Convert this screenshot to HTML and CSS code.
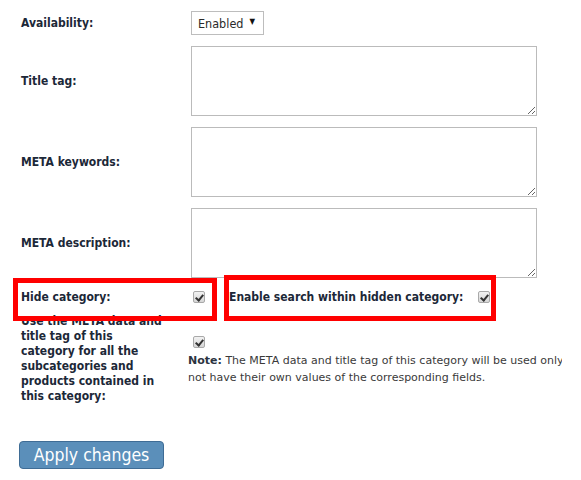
FILE: index.html
```html
<!DOCTYPE html>
<html>
<head>
<meta charset="utf-8">
<title>Category</title>
<link rel="stylesheet" href="styles.css">
</head>
<body>
<div class="page">
  <div class="form">
    <div class="label">Availability:</div>
    <div class="field">
      <span class="select-wrap">
        <select class="select"><option>Enabled</option><option>Disabled</option></select>
        <span class="arrow">▼</span>
      </span>
    </div>

    <div class="label">Title tag:</div>
    <div class="field"><textarea class="area"></textarea></div>

    <div class="label">META keywords:</div>
    <div class="field"><textarea class="area"></textarea></div>

    <div class="label">META description:</div>
    <div class="field"><textarea class="area"></textarea></div>

    <div class="label">Hide category:</div>
    <div class="field hide-row">
      <input type="checkbox" class="check" checked>
      <span class="label inline-label">Enable search within hidden category:</span>
      <input type="checkbox" class="check" checked>
    </div>

    <div class="label long-label">Use the META data and title tag of this category for all the subcategories and products contained in this category:</div>
    <div class="field meta-field">
      <input type="checkbox" class="check" checked>
      <div class="note"><b>Note:</b> The META data and title tag of this category will be used only for subcategories and products which do<br>not have their own values of the corresponding fields.</div>
    </div>
  </div>
  <button class="apply">Apply changes</button>
</div>
<div class="mark mark-hide"></div>
<div class="mark mark-search"></div>
</body>
</html>
```

FILE: styles.css
```css
html, body {
  margin: 0;
  padding: 0;
  background: #ffffff;
}

body {
  font-family: "DejaVu Sans Condensed", "DejaVu Sans", sans-serif;
  color: #1c2838;
  position: relative;
  width: 581px;
  height: 480px;
  overflow: hidden;
}

.page {
  padding: 11px 0 0 21px;
  width: 541px;
}

.form {
  display: grid;
  grid-template-columns: 167px 374px;
  row-gap: 11px;
  align-items: center;
}

.label {
  font-weight: bold;
  font-size: 12px;
  line-height: 15px;
  color: #1c2838;
}

.long-label {
  width: 145px;
  margin-top: -2px;
}

.field {
  display: flex;
  align-items: center;
  overflow: hidden;
}

.select-wrap {
  position: relative;
  display: inline-block;
  margin-left: 3px;
}

.select {
  appearance: none;
  -webkit-appearance: none;
  width: 73px;
  height: 24px;
  border: 1px solid #bdbdbd;
  border-radius: 0;
  background: #ffffff;
  font-family: "DejaVu Sans Condensed", "DejaVu Sans", sans-serif;
  font-size: 12.5px;
  color: #2a2a2a;
  padding: 0 0 0 6px;
  display: block;
}

.arrow {
  position: absolute;
  right: 9px;
  top: 6px;
  font-size: 8px;
  line-height: 10px;
  color: #111;
  pointer-events: none;
}

.area {
  display: block;
  margin: 0 0 0 3px;
  width: 346px;
  height: 70px;
  box-sizing: border-box;
  border: 1px solid #bbbbbb;
  border-radius: 0;
  padding: 2px;
  resize: both;
  font-family: "DejaVu Sans", sans-serif;
}

.check {
  appearance: none;
  -webkit-appearance: none;
  width: 12px;
  height: 12px;
  margin: 2px 0 2px 5px;
  box-sizing: border-box;
  border: 1px solid #a9a9a9;
  border-radius: 2px;
  background: linear-gradient(#f2f2f2, #d6d6d6);
  position: relative;
  flex: none;
}

.check:checked::after {
  content: "";
  position: absolute;
  left: 3px;
  top: 1px;
  width: 3px;
  height: 6px;
  border-right: 2px solid #333;
  border-bottom: 2px solid #333;
  transform: rotate(40deg);
}

.inline-label {
  margin-left: 24px;
  margin-right: 10px;
  white-space: nowrap;
}

.meta-field {
  flex-direction: column;
  align-items: flex-start;
  margin-top: -2px;
}

.meta-field .check {
  margin: 3px 0 4px 5px;
}

.note {
  font-family: "DejaVu Sans", sans-serif;
  font-size: 11px;
  line-height: 17px;
  color: #3a3a3a;
  white-space: nowrap;
}

.note b {
  color: #2c3440;
}

.apply {
  margin-top: 37px;
  margin-left: -2px;
  width: 145px;
  height: 28px;
  box-sizing: border-box;
  background: #5b8fba;
  border: 1px solid #3f6c95;
  border-radius: 4px;
  color: #ffffff;
  font-family: "DejaVu Sans Condensed", "DejaVu Sans", sans-serif;
  font-size: 17.5px;
  padding: 0;
  display: block;
}

.mark {
  position: absolute;
  box-sizing: border-box;
  border: 5px solid #ff0000;
}

.mark-hide {
  left: 13px;
  top: 278px;
  width: 204px;
  height: 43px;
}

.mark-search {
  left: 224px;
  top: 275px;
  width: 272px;
  height: 46px;
}
```
